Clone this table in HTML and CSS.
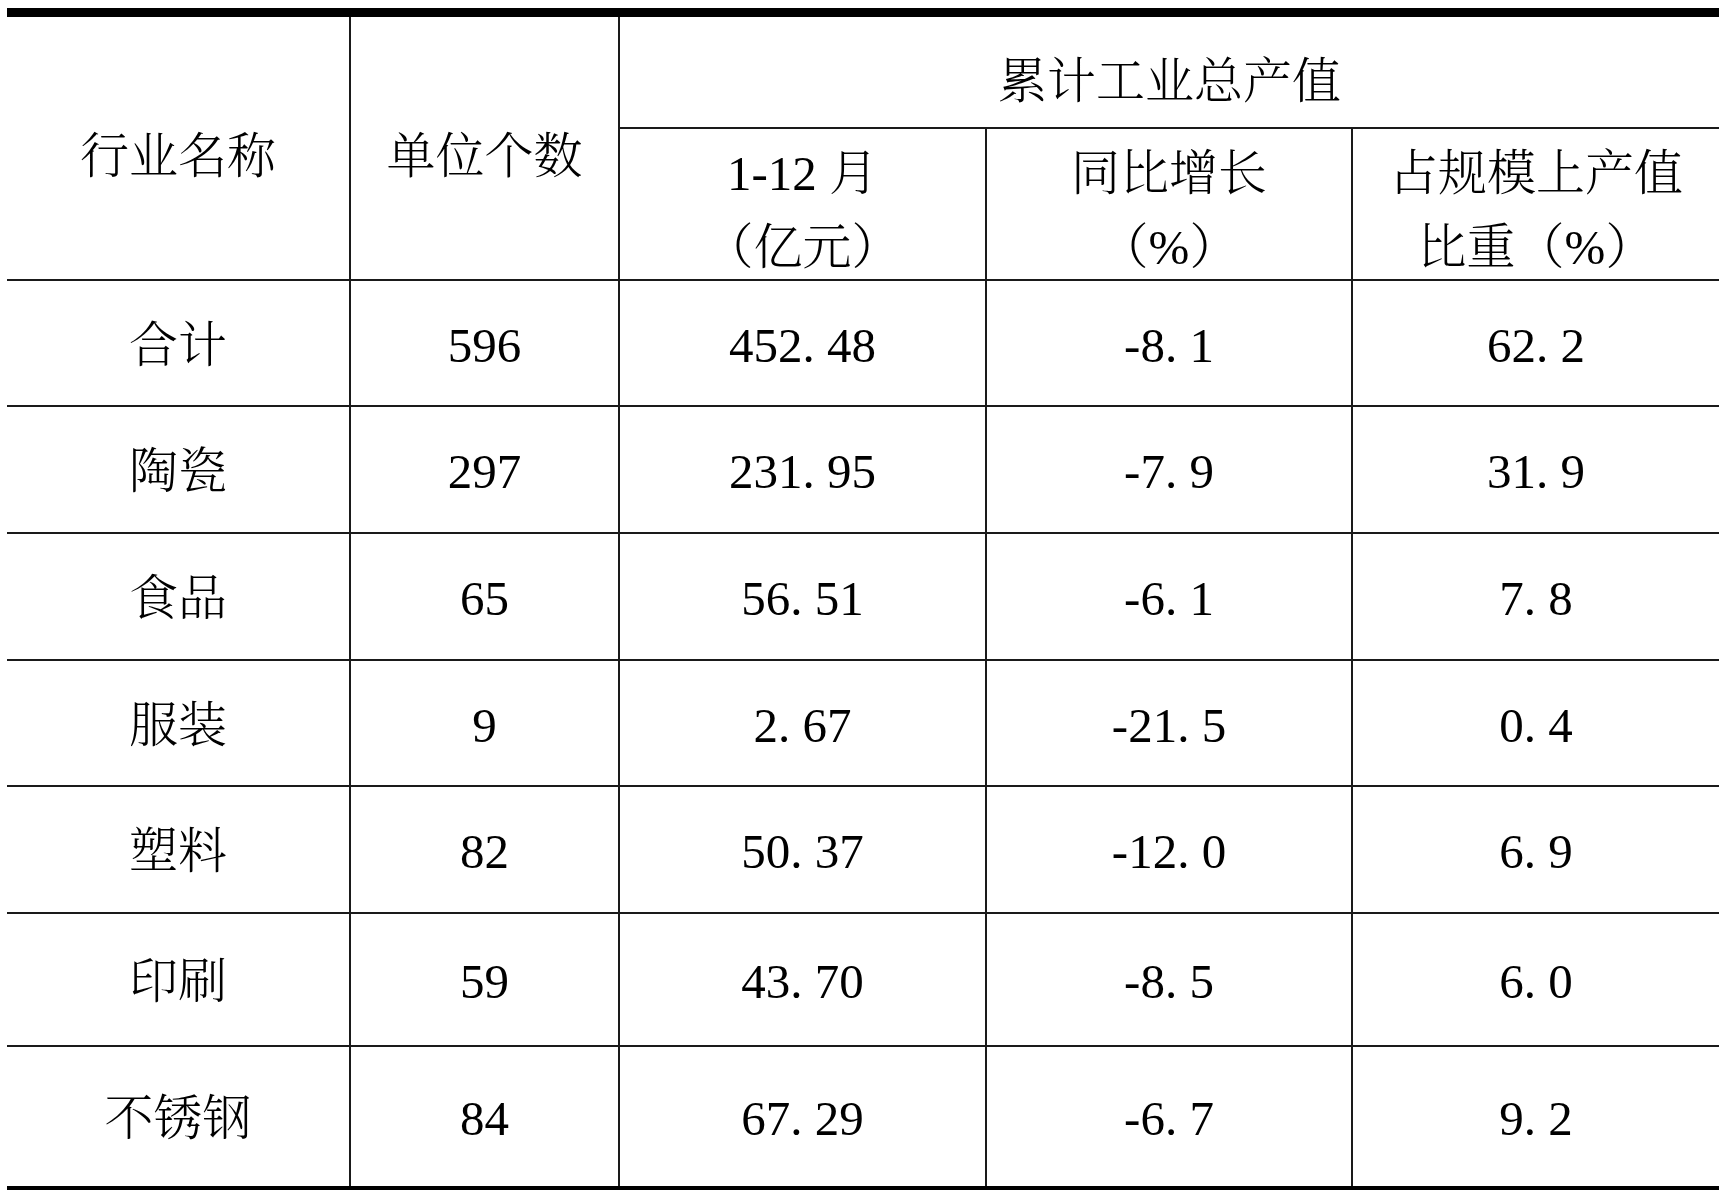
FILE: index.html
```html
<!DOCTYPE html>
<html lang="zh-CN">
<head>
<meta charset="utf-8">
<title>累计工业总产值</title>
<link rel="stylesheet" href="styles.css">
</head>
<body>
<div class="sheet">
  <div class="cell head name">行业名称</div>
  <div class="cell head units">单位个数</div>
  <div class="cell head group">累计工业总产值</div>
  <div class="cell head sub"><span>1-12 月</span><span>（亿元）</span></div>
  <div class="cell head sub"><span>同比增长</span><span>（%）</span></div>
  <div class="cell head sub last-col"><span>占规模上产值</span><span>比重（%）</span></div>

  <div class="cell">合计</div>
  <div class="cell">596</div>
  <div class="cell">452<span class="dot">.</span>48</div>
  <div class="cell">-8<span class="dot">.</span>1</div>
  <div class="cell last-col">62<span class="dot">.</span>2</div>

  <div class="cell">陶瓷</div>
  <div class="cell">297</div>
  <div class="cell">231<span class="dot">.</span>95</div>
  <div class="cell">-7<span class="dot">.</span>9</div>
  <div class="cell last-col">31<span class="dot">.</span>9</div>

  <div class="cell">食品</div>
  <div class="cell">65</div>
  <div class="cell">56<span class="dot">.</span>51</div>
  <div class="cell">-6<span class="dot">.</span>1</div>
  <div class="cell last-col">7<span class="dot">.</span>8</div>

  <div class="cell">服装</div>
  <div class="cell">9</div>
  <div class="cell">2<span class="dot">.</span>67</div>
  <div class="cell">-21<span class="dot">.</span>5</div>
  <div class="cell last-col">0<span class="dot">.</span>4</div>

  <div class="cell">塑料</div>
  <div class="cell">82</div>
  <div class="cell">50<span class="dot">.</span>37</div>
  <div class="cell">-12<span class="dot">.</span>0</div>
  <div class="cell last-col">6<span class="dot">.</span>9</div>

  <div class="cell">印刷</div>
  <div class="cell">59</div>
  <div class="cell">43<span class="dot">.</span>70</div>
  <div class="cell">-8<span class="dot">.</span>5</div>
  <div class="cell last-col">6<span class="dot">.</span>0</div>

  <div class="cell last-row">不锈钢</div>
  <div class="cell last-row">84</div>
  <div class="cell last-row">67<span class="dot">.</span>29</div>
  <div class="cell last-row">-6<span class="dot">.</span>7</div>
  <div class="cell last-row last-col">9<span class="dot">.</span>2</div>
</div>
</body>
</html>
```

FILE: styles.css
```css
html, body {
  margin: 0;
  padding: 0;
  background: #ffffff;
}

body {
  padding: 8px 2px 0 7px;
  font-family: "Liberation Serif", "Noto Serif CJK SC", "Noto Sans CJK SC", serif;
  font-weight: 300;
  font-size: 49px;
  color: #000000;
}

.sheet {
  width: 1712px;
  display: grid;
  grid-template-columns: 344px 269px 367px 366px 366px;
  grid-template-rows: 112px 152px 126px 127px 127px 126px 127px 133px 139px;
  border-top: 9px solid #000000;
  border-bottom: 9px solid #000000;
}

.cell {
  box-sizing: border-box;
  border-right: 2px solid #1a1a1a;
  border-bottom: 2px solid #1a1a1a;
  display: flex;
  align-items: center;
  justify-content: center;
  text-align: center;
  white-space: nowrap;
  line-height: 1;
  padding-top: 4px;
}

.last-col {
  border-right: none;
}

.last-row {
  border-bottom: none;
}

.name {
  grid-column: 1;
  grid-row: 1 / 3;
  padding-top: 16px;
}

.units {
  grid-column: 2;
  grid-row: 1 / 3;
  padding-top: 16px;
}

.group {
  grid-column: 3 / 6;
  grid-row: 1;
  border-right: none;
  padding-top: 18px;
}

.sub {
  flex-direction: column;
  line-height: 74px;
  padding-top: 13px;
}

.sub span {
  display: block;
}

.dot {
  display: inline-block;
  width: 0.5em;
  text-align: left;
}
```
